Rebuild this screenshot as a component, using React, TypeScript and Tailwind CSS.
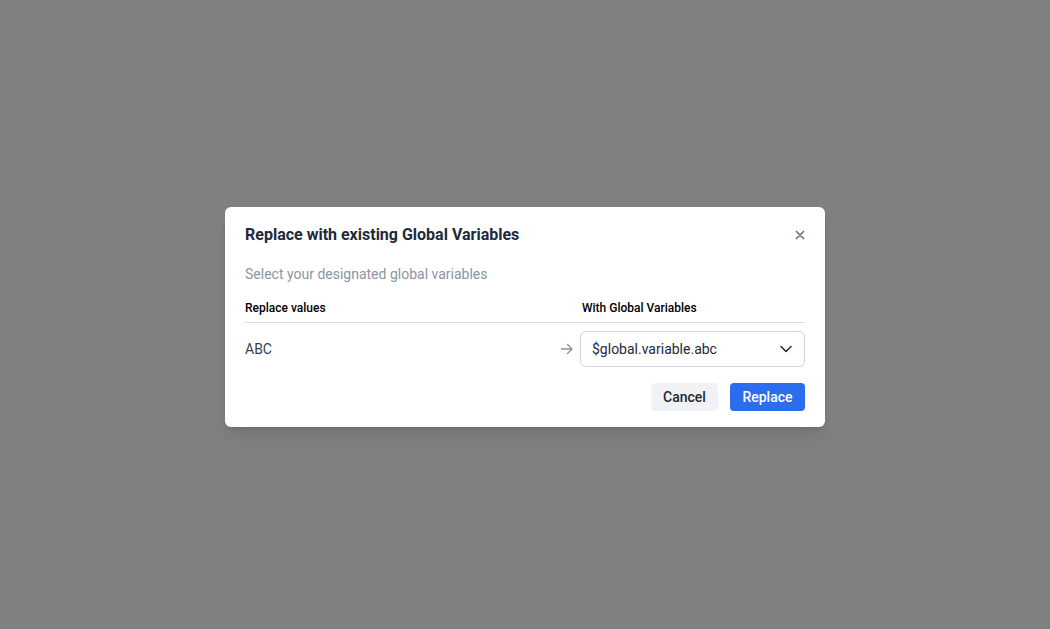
import React from 'react';

const App = () => {
  return (
    <div className="w-[1050px] h-[629px] bg-[#808080] flex items-center justify-center pt-1" style={{ fontFamily: 'Roboto, "Liberation Sans", sans-serif' }}>
      <div className="w-[600px] bg-white rounded-md shadow-lg px-5 pt-4 pb-4">
        {/* Header */}
        <div className="flex items-center justify-between h-6">
          <h2 className="text-base font-bold text-[#1e293b] leading-6">Replace with existing Global Variables</h2>
          <button className="text-[#6b7280] w-4 h-6 flex items-center justify-center -mr-[3px]">
            <svg width="10" height="10" viewBox="0 0 10 10">
              <path d="M1.5 1.5 L8.5 8.5 M8.5 1.5 L1.5 8.5" stroke="currentColor" strokeWidth="1.7" strokeLinecap="round" />
            </svg>
          </button>
        </div>
        <p className="mt-[17px] text-sm leading-5 text-[#8b95a1]">Select your designated global variables</p>

        {/* Table header */}
        <div className="mt-4 flex border-b border-[#d9dce1] pb-[6px]">
          <div className="flex-1 text-xs font-medium leading-4 text-black">Replace values</div>
          <div className="w-[223px] text-xs font-medium leading-4 text-black">With Global Variables</div>
        </div>

        {/* Row */}
        <div className="mt-2 flex items-center">
          <div className="flex-1 text-sm text-[#374151]">ABC</div>
          <svg width="16" height="16" viewBox="0 0 16 16" className="text-[#8b95a1] mr-[5px]">
            <path d="M2.5 8 H13 M8.5 3.5 L13 8 L8.5 12.5" stroke="currentColor" strokeWidth="1.4" fill="none" strokeLinecap="round" strokeLinejoin="round" />
          </svg>
          <div className="w-[225px] h-9 border border-[#d1d5db] rounded-md flex items-center justify-between pl-[11px] pr-[11px]">
            <span className="text-sm text-[#1f2937]">$global.variable.abc</span>
            <svg width="14" height="14" viewBox="0 0 14 14" className="text-[#1f2937]">
              <path d="M2 4.5 L7 9.5 L12 4.5" stroke="currentColor" strokeWidth="1.5" fill="none" strokeLinecap="round" strokeLinejoin="round" />
            </svg>
          </div>
        </div>

        {/* Footer */}
        <div className="mt-4 flex justify-end gap-3">
          <button className="h-7 w-[67px] rounded bg-[#f1f2f4] text-sm font-medium text-[#1f2937]">Cancel</button>
          <button className="h-7 w-[75px] rounded bg-[#2b6ded] text-sm font-medium text-white">Replace</button>
        </div>
      </div>
    </div>
  );
};

export default App;
